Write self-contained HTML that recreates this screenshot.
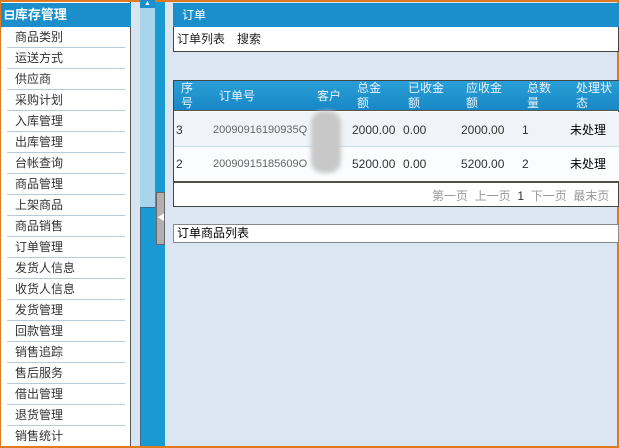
<!DOCTYPE html>
<html><head><meta charset="utf-8"><style>
*{margin:0;padding:0;box-sizing:border-box}
body{width:619px;height:448px;overflow:hidden;background:#dce6f2;position:relative;font-family:"Liberation Sans","Noto Sans CJK SC",sans-serif;font-size:12px;color:#222}
.a{position:absolute}
.mi{position:absolute;left:7px;width:118px;height:21px;border-bottom:1px solid #b4ccd8;padding-left:8px;line-height:21px;color:#333;font-size:12px}
.th{position:absolute;color:#e8f4ff;font-size:12px;line-height:15px}
.td{position:absolute;font-size:11px;color:#333}
</style></head><body>
<div class="a" style="left:0;top:0;width:619px;height:448px;border:1px solid #e07a20;border-width:2px 2px 2px 1px"></div>
<div class="a" style="left:1px;top:2px;width:130px;height:444px;background:#fff;border-right:1px solid #555"></div>
<div class="a" style="left:1px;top:3px;width:130px;height:24px;background:#1a8fcc;color:#fff;font-weight:bold;font-size:13px;line-height:24px;padding-left:3px">⊟库存管理</div>
<div class="mi" style="top:27px">商品类别</div>
<div class="mi" style="top:48px">运送方式</div>
<div class="mi" style="top:69px">供应商</div>
<div class="mi" style="top:90px">采购计划</div>
<div class="mi" style="top:111px">入库管理</div>
<div class="mi" style="top:132px">出库管理</div>
<div class="mi" style="top:153px">台帐查询</div>
<div class="mi" style="top:174px">商品管理</div>
<div class="mi" style="top:195px">上架商品</div>
<div class="mi" style="top:216px">商品销售</div>
<div class="mi" style="top:237px">订单管理</div>
<div class="mi" style="top:258px">发货人信息</div>
<div class="mi" style="top:279px">收货人信息</div>
<div class="mi" style="top:300px">发货管理</div>
<div class="mi" style="top:321px">回款管理</div>
<div class="mi" style="top:342px">销售追踪</div>
<div class="mi" style="top:363px">售后服务</div>
<div class="mi" style="top:384px">借出管理</div>
<div class="mi" style="top:405px">退货管理</div>
<div class="mi" style="top:426px;border:none">销售统计</div>
<div class="a" style="left:132px;top:2px;width:8px;height:444px;background:#d8e4f0"></div>
<div class="a" style="left:140px;top:2px;width:15px;height:444px;background:#a8d4ec"></div>
<div class="a" style="left:140px;top:207px;width:15px;height:239px;background:#1a9ad2;border-left:1px solid #3a6a8a;border-top:1px solid #3a6a8a"></div>
<div class="a" style="left:140px;top:0;width:15px;height:8px;background:#1a8fcc;color:#fff;font-size:7px;text-align:center;line-height:7px">▲</div>
<div class="a" style="left:155px;top:2px;width:10px;height:444px;background:#1a9ad2"></div>
<div class="a" style="left:156px;top:192px;width:9px;height:53px;background:#b0b0b0;border:1px solid #666;color:#fff;font-size:8px;line-height:50px">◀</div>
<div class="a" style="left:173px;top:3px;width:446px;height:24px;background:#1a8fcc;color:#fff;line-height:24px;padding-left:9px;font-size:12px">订单</div>
<div class="a" style="left:173px;top:27px;width:446px;height:25px;background:#fff;border:1px solid #444;border-top:none;line-height:24px;padding-left:3px">订单列表　搜索</div>
<div class="a" style="left:173px;top:80px;width:446px;height:127px;background:#fff;border:1px solid #444"></div>
<div class="a" style="left:174px;top:81px;width:445px;height:30px;background:linear-gradient(#2a9ed6,#1888c6);border-bottom:1px solid #555"></div>
<div class="th" style="left:181px;top:81px">序<br>号</div>
<div class="th" style="left:219px;top:89px">订单号</div>
<div class="th" style="left:317px;top:89px">客户</div>
<div class="th" style="left:357px;top:81px">总金<br>额</div>
<div class="th" style="left:408px;top:81px">已收金<br>额</div>
<div class="th" style="left:466px;top:81px">应收金<br>额</div>
<div class="th" style="left:527px;top:81px">总数<br>量</div>
<div class="th" style="left:576px;top:81px">处理状<br>态</div>
<div class="a" style="left:174px;top:112px;width:445px;height:35px;background:#f0f4f8;border-bottom:1px solid #c8dce8"></div>
<div class="a" style="left:174px;top:147px;width:445px;height:34px;background:#fafcfd"></div>
<div class="a" style="left:174px;top:181px;width:445px;height:2px;background:#555044"></div>
<div class="td" style="left:176px;top:123px;font-size:12px">3</div>
<div class="td" style="left:213px;top:124px;color:#666">20090916190935Q</div>
<div class="td" style="left:352px;top:123px;font-size:12px">2000.00</div>
<div class="td" style="left:403px;top:123px;font-size:12px">0.00</div>
<div class="td" style="left:461px;top:123px;font-size:12px">2000.00</div>
<div class="td" style="left:522px;top:123px;font-size:12px">1</div>
<div class="td" style="left:570px;top:121px;font-size:12px;color:#000">未处理</div>
<div class="td" style="left:176px;top:157px;font-size:12px">2</div>
<div class="td" style="left:213px;top:158px;color:#666">20090915185609O</div>
<div class="td" style="left:352px;top:157px;font-size:12px">5200.00</div>
<div class="td" style="left:403px;top:157px;font-size:12px">0.00</div>
<div class="td" style="left:461px;top:157px;font-size:12px">5200.00</div>
<div class="td" style="left:522px;top:157px;font-size:12px">2</div>
<div class="td" style="left:570px;top:155px;font-size:12px;color:#000">未处理</div>
<div class="a" style="left:311px;top:111px;width:30px;height:62px;background:#c8c8c8;border-radius:12px;filter:blur(2px)"></div>
<div class="a" style="left:432px;top:187px;font-size:12px;color:#999;white-space:nowrap;width:186px">第一页&nbsp;&nbsp;上一页&nbsp;&nbsp;<span style="color:#333">1</span>&nbsp;&nbsp;下一页&nbsp;&nbsp;最末页</div>
<div class="a" style="left:173px;top:224px;width:446px;height:19px;background:#fff;border:1px solid #888;line-height:16px;padding-left:3px;color:#000">订单商品列表</div>
</body></html>
